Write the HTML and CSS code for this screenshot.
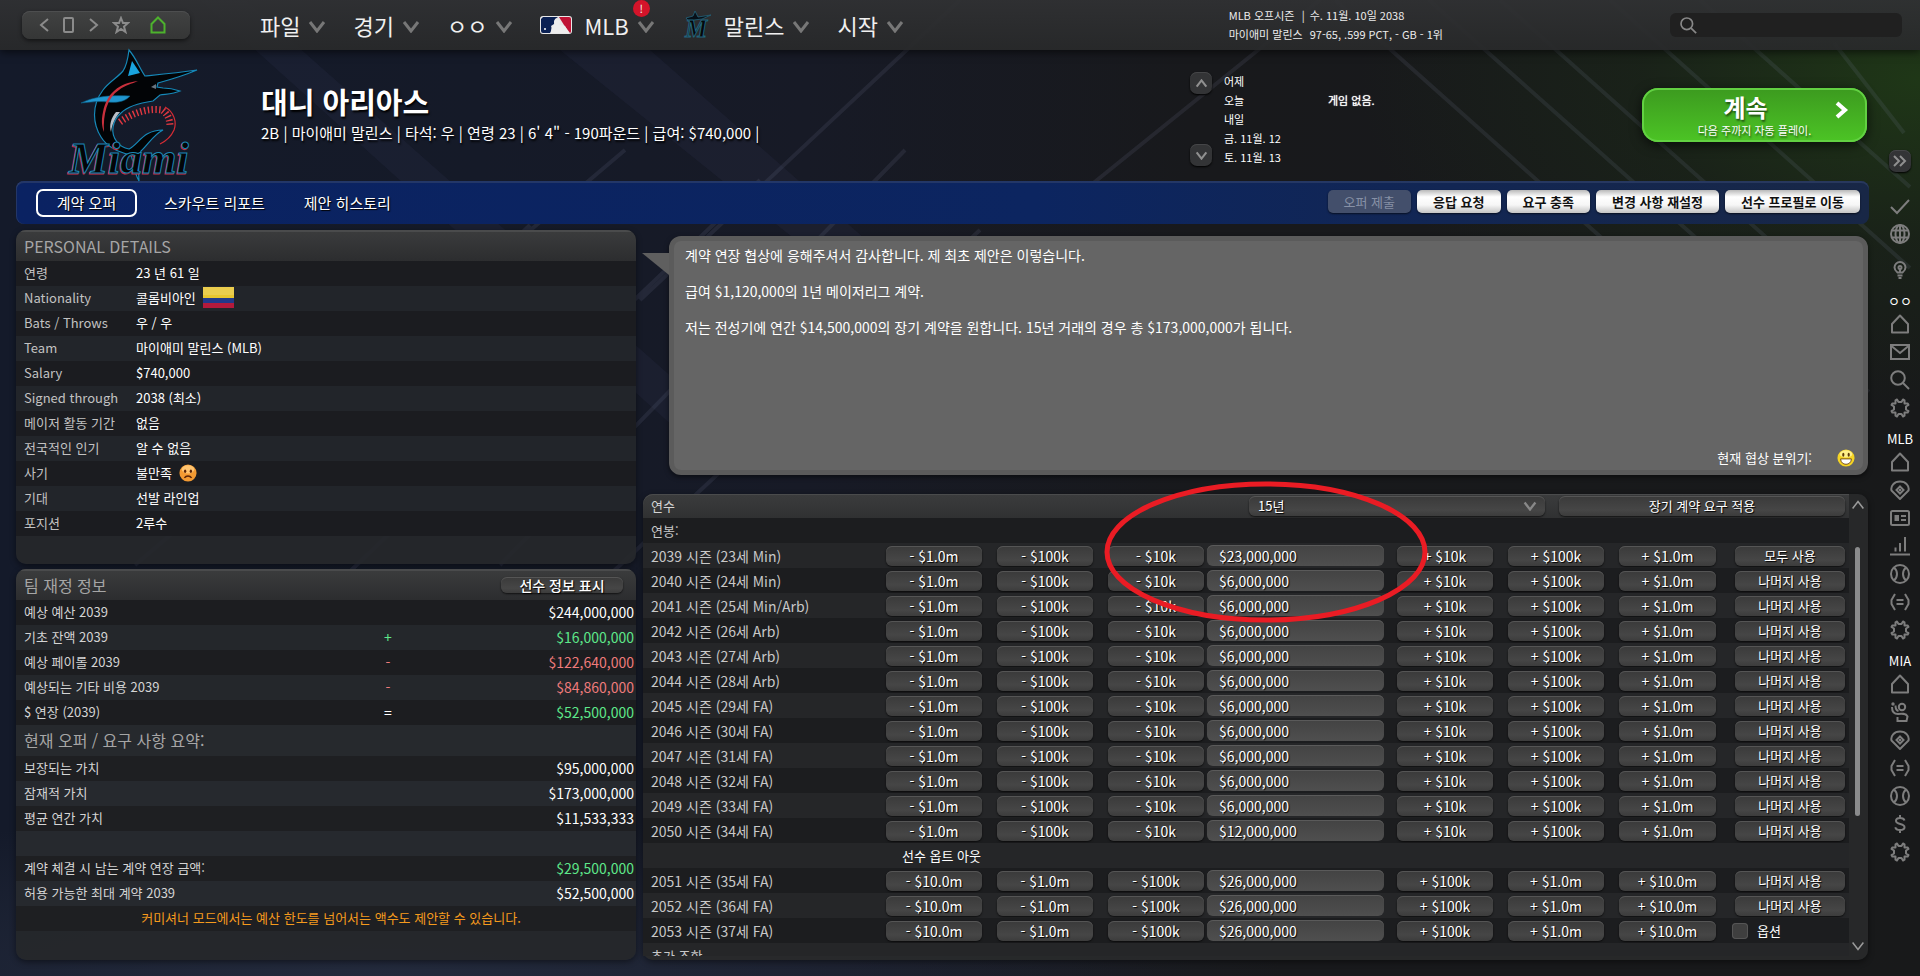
FILE: index.html
```html
<!DOCTYPE html>
<html lang="ko">
<head>
<meta charset="utf-8">
<meta name="viewport" content="width=device-width, initial-scale=1">
<title>대니 아리아스 - 계약 오퍼</title>
<link rel="stylesheet" href="styles.css">
</head>
<body>
<svg class="symbols" aria-hidden="true">
  <symbol id="chevron" viewBox="0 0 18 13"><path d="M2 2l7 9 7-9"/></symbol>
  <symbol id="check" viewBox="0 0 20 20"><path d="M1 11l6 6L19 4"/></symbol>
  <symbol id="globe" viewBox="0 0 20 20"><circle cx="10" cy="10" r="9"/><ellipse cx="10" cy="10" rx="4.500" ry="9"/><path d="M10 1v18M2 6.500h16M2 13.500h16"/></symbol>
  <symbol id="bulb" viewBox="0 0 20 20"><path d="M7.500 12.500C5 10.500 4.500 9 4.500 7.500a5.500 5.500 0 0 1 11 0c0 1.500-.5 3-3 5z"/><circle cx="10" cy="7.500" r="1.500"/><path d="M7.500 15.500h5M8.500 18h3M10 9v3"/></symbol>
  <symbol id="home" viewBox="0 0 20 20"><path stroke-linejoin="round" d="M10 1.500L18 10v8.500H2V10z"/></symbol>
  <symbol id="mail" viewBox="0 0 20 20"><path d="M1 3h18v14H1zM1.500 4L10 11l8.500-7"/></symbol>
  <symbol id="search" viewBox="0 0 20 20"><circle cx="8" cy="8" r="6.800"/><path d="M13 13l6 6"/></symbol>
  <symbol id="gear" viewBox="0 0 20 20"><path stroke-linejoin="round" d="M7 1.500l1.500 2.500h3L13 1.500l1.500.8V5.500h3.200l.8 1.500L16 8.500v3l2.500 1.500-.8 1.500h-3.200v3.200l-1.500.8-1.500-2.500h-3L7 18.500l-1.500-.8v-3.200H2.300L1.500 13 4 11.500v-3L1.500 7l.8-1.500h3.200V2.300z"/></symbol>
  <symbol id="field" viewBox="0 0 20 20"><path d="M10 19L1.500 10.500C.5 6 4 1.500 10 1.500s9.500 4.500 8.500 9z"/><path d="M10 6.500l3.500 3.500-3.500 3.500L6.500 10z"/><path d="M10 9v2"/></symbol>
  <symbol id="card" viewBox="0 0 20 20"><rect x="1" y="3" width="18" height="14" rx="1.500"/><path class="solid" d="M4.500 7h4.500v6H4.500zM11 7h5v2h-5zM11 11h5v2h-5z"/></symbol>
  <symbol id="chart" viewBox="0 0 20 20"><path d="M0 18.500h20M5.500 15.500v-4M10 15.500V7M15 15.500V1"/></symbol>
  <symbol id="ball" viewBox="0 0 20 20"><circle cx="10" cy="10" r="9"/><path d="M4 3.500c4 3.500 4 9.500 0 13M16 3.500c-4 3.500-4 9.500 0 13"/></symbol>
  <symbol id="trade" viewBox="0 0 20 20"><path d="M5 2L1.500 8v4L5 18M15 2l3.500 6v4L15 18M6.500 8h7M6.500 12h7"/></symbol>
  <symbol id="player" viewBox="0 0 20 20"><circle cx="12" cy="5" r="3.200"/><circle class="solid" cx="3" cy="2" r="1.700"/><path d="M2 5c0 5 2 7 6 7 4-.5 8-1 9.500 2.500L16.500 19H7.500v-4M5.500 3.500c0 3 1 5 3 5.500"/></symbol>
  <symbol id="dollar" viewBox="0 0 20 20"><path d="M14.500 6.500C14 4.800 12.500 4 10 4 7.500 4 6 5 6 6.800c0 4.400 8.500 2 8.500 6.400 0 1.800-1.800 2.800-4.500 2.800-2.800 0-4.300-1-4.700-2.800M10 1v3M10 16v3"/></symbol>
</svg>

<svg class="backdrop" viewBox="0 0 1920 976" preserveAspectRatio="none" aria-hidden="true">
  <path class="wide" d="M200 0h45L760 455h-55zM560 50h90l330 290h-60z"/>
  <path class="ray" d="M625 150L135 565M760 180L320 600M905 150L500 565M980 230L400 770M1320 0L1060 210M960 0L640 300M530 225L430 320M1429 0l440 392M1335 0l500 446M1500 0l350 312M1610 0l300 268M1700 0l210 187M1834 43l70 90"/>
</svg>

<header class="topbar">
  <nav class="quick" aria-label="탐색">
    <button aria-label="뒤로"><svg viewBox="0 0 10 14"><path d="M9 1L2 7l7 6"/></svg></button>
    <button aria-label="최근"><svg viewBox="0 0 12 18"><rect x="1" y="2" width="9" height="14" rx="1"/></svg></button>
    <button aria-label="앞으로"><svg viewBox="0 0 10 14"><path d="M1 1l7 6-7 6"/></svg></button>
    <button aria-label="즐겨찾기"><svg viewBox="0 0 18 18"><path d="M9 2l2 5h5l-4 3.500 1.500 5.500L9 13l-4.500 3L6 10.500 2 7h5z"/></svg></button>
    <button class="green" aria-label="홈"><svg viewBox="0 0 18 18"><path d="M9 1.500l6.500 6.500v8.500h-13V8z"/></svg></button>
  </nav>
  <nav class="menu" aria-label="주 메뉴">
    <button>파일<svg class="caret"><use href="#chevron"/></svg></button>
    <button>경기<svg class="caret"><use href="#chevron"/></svg></button>
    <button>ㅇㅇ<svg class="caret"><use href="#chevron"/></svg></button>
    <button>
      <svg class="mlb" viewBox="0 0 32 18"><rect width="32" height="18" rx="3" fill="#e8e8e8"/><path d="M3 1h15l-3 2-1 5-3 2 1 3-2 4H3a2 2 0 0 1-2-2V3z" fill="#0b2154"/><path d="M19 1h10a2 2 0 0 1 2 2v12a2 2 0 0 1-1 2L24 9z" fill="#c01335"/><circle cx="17" cy="6" r="3" fill="#eee"/><path d="M11 17c0-5 1-9 6-9l8 2 4 7z" fill="#eee"/><circle cx="5" cy="13" r="1" fill="#fff"/></svg>
      MLB<svg class="caret"><use href="#chevron"/></svg><span class="badge">!</span>
    </button>
    <button>
      <svg class="fish" viewBox="0 0 30 30"><path d="M4 8l7-2 2-5 3 6 13-2-9 4-8 1-3 4z" fill="#071018" stroke="#23647c" stroke-width=".8"/><text x="3" y="27" class="fish-m">M</text></svg>
      말린스<svg class="caret"><use href="#chevron"/></svg>
    </button>
    <button>시작<svg class="caret"><use href="#chevron"/></svg></button>
  </nav>
  <dl class="status">
    <dt>MLB 오프시즌</dt><dd class="bar">|</dd><dd>수. 11월. 10일 2038</dd>
    <dt>마이애미 말린스</dt><dd class="bar"></dd><dd>97-65, .599 PCT, - GB - 1위</dd>
  </dl>
  <label class="find"><svg><use href="#search"/></svg><input type="search" aria-label="검색"></label>
</header>

<div class="shell">
  <main class="page">
    <section class="hero">
      <svg class="logo" viewBox="0 0 134 131" role="img" aria-label="Miami Marlins">
        <path d="M65 0C72 8 76 19 81 26c10-1 32-3 52-6-14 6-28 10-39 13l-1 4 6 1c7 0 11 1 17 3-7 3-14 3-20 4l-7 6C75 53 63 57 57 63c-9 8-11 20-4 29 3 4 7 6 12 7 10-5 14-19 34-19-10 5-15 15-22 21-3 8-3 17-2 30-5-8-5-18-8-26-14-3-24-8-30-18-8-13-10-31 2-47 6-8 14-12 20-19 4-6 5-13 6-21z" fill="#020406" stroke="#1688b8" stroke-width="1.200"/>
        <path d="M68 11l-4 15 12-3z" fill="#19a4df"/>
        <path d="M17 53c14-7 31-8 49-7-5 6-14 7-22 6-9-1-17 0-27 1z" fill="#2196cf" stroke="#0a6288" stroke-width=".6"/>
        <path d="M74 31C55 33 43 43 39 62c-2 9-1 15 1 20-1-18 3-34 15-42 6-5 13-6 19-9z" fill="#c8303c"/>
        <path d="M52 62c-5 6-7 13-5 20 1-8 4-14 9-20z" fill="#b8bec6"/>
        <path d="M87 37l5-3v5z" fill="#697580"/>
        <path d="M101 57c9 5 12 15 9 23-3 7-8 11-14 14" fill="none" stroke="#d62c35" stroke-width="1.200"/>
        <path d="M56 72c14-10 29-14 42-12 6 4 8 10 8 17" fill="none" stroke="#e03840" stroke-width="7" stroke-dasharray="1.400 2.400"/>
        <text class="script red" x="4" y="124">Miami</text>
        <text class="script" x="5" y="123">Miami</text>
      </svg>
      <div class="who">
        <h1>대니 아리아스</h1>
        <p>2B | 마이애미 말린스 | 타석: 우 | 연령 23 | 6' 4" - 190파운드 | 급여: $740,000 |</p>
      </div>
      <div class="schedule">
        <div class="steps">
          <button aria-label="이전"><svg class="up"><use href="#chevron"/></svg></button>
          <button aria-label="다음"><svg><use href="#chevron"/></svg></button>
        </div>
        <dl>
          <dt>어제</dt><dd></dd>
          <dt>오늘</dt><dd>게임 없음.</dd>
          <dt>내일</dt><dd></dd>
          <dt>금. 11월. 12</dt><dd></dd>
          <dt>토. 11월. 13</dt><dd></dd>
        </dl>
      </div>
      <button class="continue"><b>계속</b><small>다음 주까지 자동 플레이.</small><svg viewBox="0 0 14 18"><path d="M2 2l8 7-8 7"/></svg></button>
    </section>

    <div class="tabs">
      <nav aria-label="선수">
        <a class="active" href="#offer">계약 오퍼</a>
        <a href="#scout">스카우트 리포트</a>
        <a href="#history">제안 히스토리</a>
      </nav>
      <div class="actions">
        <button disabled>오퍼 제출</button>
        <button>응답 요청</button>
        <button>요구 충족</button>
        <button>변경 사항 재설정</button>
        <button>선수 프로필로 이동</button>
      </div>
    </div>

    <div class="columns">
      <div class="left">
        <section class="panel personal">
          <header class="head"><h2>PERSONAL DETAILS</h2></header>
          <dl class="rows">
            <div><dt>연령</dt><dd>23 년 61 일</dd></div>
            <div><dt>Nationality</dt><dd>콜롬비아인 <svg class="flag" viewBox="0 0 31 21" role="img" aria-label="콜롬비아"><path fill="#e8c52f" d="M0 0h31v11H0z"/><path fill="#22398a" d="M0 11h31v5H0z"/><path fill="#b31a3c" d="M0 16h31v5H0z"/><path fill="#fff" opacity=".15" d="M0 0h31v8H0z"/></svg></dd></div>
            <div><dt>Bats / Throws</dt><dd>우 / 우</dd></div>
            <div><dt>Team</dt><dd>마이애미 말린스 (MLB)</dd></div>
            <div><dt>Salary</dt><dd>$740,000</dd></div>
            <div><dt>Signed through</dt><dd>2038 (최소)</dd></div>
            <div><dt>메이저 활동 기간</dt><dd>없음</dd></div>
            <div><dt>전국적인 인기</dt><dd>알 수 없음</dd></div>
            <div><dt>사기</dt><dd>불만족 <svg class="face" viewBox="0 0 20 20"><circle cx="10" cy="10" r="9.500" fill="#f39a32"/><ellipse cx="10" cy="6" rx="7" ry="4.500" fill="#ffc470"/><ellipse cx="6.800" cy="8" rx="1.300" ry="2" fill="#5a2408"/><ellipse cx="13.200" cy="8" rx="1.300" ry="2" fill="#5a2408"/><path d="M6 15.500c2-3 6-3 8 0" fill="none" stroke="#5a2408" stroke-width="1.600"/></svg></dd></div>
            <div><dt>기대</dt><dd>선발 라인업</dd></div>
            <div><dt>포지션</dt><dd>2루수</dd></div>
          </dl>
        </section>

        <section class="panel finance">
          <header class="head"><h2>팀 재정 정보</h2><button class="btn">선수 정보 표시</button></header>
          <table class="sums">
            <tr><th>예상 예산 2039</th><td></td><td class="sum">$244,000,000</td></tr>
            <tr><th>기초 잔액 2039</th><td class="good">+</td><td class="sum good">$16,000,000</td></tr>
            <tr><th>예상 페이롤 2039</th><td class="bad">-</td><td class="sum bad">$122,640,000</td></tr>
            <tr><th>예상되는 기타 비용 2039</th><td class="bad">-</td><td class="sum bad">$84,860,000</td></tr>
            <tr><th>$ 연장 (2039)</th><td>=</td><td class="sum good">$52,500,000</td></tr>
            <tr class="section"><th colspan="3">현재 오퍼 / 요구 사항 요약:</th></tr>
            <tr><th>보장되는 가치</th><td></td><td class="sum">$95,000,000</td></tr>
            <tr><th>잠재적 가치</th><td></td><td class="sum">$173,000,000</td></tr>
            <tr><th>평균 연간 가치</th><td></td><td class="sum">$11,533,333</td></tr>
            <tr><th></th><td></td><td></td></tr>
            <tr><th>계약 체결 시 남는 계약 연장 금액:</th><td></td><td class="sum good">$29,500,000</td></tr>
            <tr><th>허용 가능한 최대 계약 2039</th><td></td><td class="sum">$52,500,000</td></tr>
            <tr><td class="note" colspan="3">커미셔너 모드에서는 예산 한도를 넘어서는 액수도 제안할 수 있습니다.</td></tr>
          </table>
        </section>
      </div>

      <div class="right">
        <section class="bubble">
          <p>계약 연장 협상에 응해주셔서 감사합니다. 제 최초 제안은 이렇습니다.</p>
          <p>급여 $1,120,000의 1년 메이저리그 계약.</p>
          <p>저는 전성기에 연간 $14,500,000의 장기 계약을 원합니다. 15년 거래의 경우 총 $173,000,000가 됩니다.</p>
          <footer>현재 협상 분위기: <svg class="face" viewBox="0 0 20 20"><circle cx="10" cy="10" r="9.500" fill="#f5d424"/><ellipse cx="10" cy="5.500" rx="7" ry="4" fill="#fff08a"/><ellipse cx="7" cy="6.500" rx="1.200" ry="2.200" fill="#5c3a08"/><ellipse cx="13" cy="6.500" rx="1.200" ry="2.200" fill="#5c3a08"/><path d="M4 11h12c0 8-12 8-12 0z" fill="#fff" stroke="#6b430a"/></svg></footer>
        </section>

        <section class="panel contract">
          <header class="years">
            <label for="years">연수</label>
            <span class="pick"><select id="years" class="btn"><option>15년</option></select><svg><use href="#chevron"/></svg></span>
            <button class="btn">장기 계약 요구 적용</button>
          </header>
          <div class="scroll">
            <table class="seasons">
              <colgroup><col class="c-name"><col class="c-step"><col class="c-step"><col class="c-near"><col class="c-money"><col class="c-step"><col class="c-step"><col class="c-last"><col class="c-use"></colgroup>
              <tbody id="seasons"></tbody>
            </table>
          </div>
          <div class="track"><svg class="up"><use href="#chevron"/></svg><i></i><svg><use href="#chevron"/></svg></div>
          <svg class="ring" viewBox="0 0 324 142" preserveAspectRatio="none" aria-hidden="true"><ellipse cx="162" cy="71" rx="159" ry="68"/></svg>
        </section>
      </div>
    </div>
  </main>

  <aside class="rail">
    <button class="fold" aria-label="펼치기"><svg viewBox="0 0 16 16"><path d="M2 3l5 5-5 5M8 3l5 5-5 5"/></svg></button>
    <svg class="ico"><use href="#check"/></svg>
    <svg class="ico"><use href="#globe"/></svg>
    <svg class="ico bulb"><use href="#bulb"/></svg>
    <h3>ㅇㅇ</h3>
    <svg class="ico"><use href="#home"/></svg>
    <svg class="ico"><use href="#mail"/></svg>
    <svg class="ico"><use href="#search"/></svg>
    <svg class="ico"><use href="#gear"/></svg>
    <h3>MLB</h3>
    <svg class="ico"><use href="#home"/></svg>
    <svg class="ico"><use href="#field"/></svg>
    <svg class="ico"><use href="#card"/></svg>
    <svg class="ico"><use href="#chart"/></svg>
    <svg class="ico"><use href="#ball"/></svg>
    <svg class="ico"><use href="#trade"/></svg>
    <svg class="ico"><use href="#gear"/></svg>
    <h3>MIA</h3>
    <svg class="ico"><use href="#home"/></svg>
    <svg class="ico"><use href="#player"/></svg>
    <svg class="ico"><use href="#field"/></svg>
    <svg class="ico"><use href="#trade"/></svg>
    <svg class="ico"><use href="#ball"/></svg>
    <svg class="ico"><use href="#dollar"/></svg>
    <svg class="ico"><use href="#gear"/></svg>
  </aside>
</div>
<script src="seasons.js"></script>
</body>
</html>
```

FILE: styles.css
```css
* { box-sizing: border-box; }

body {
  margin: 0;
  min-height: 100vh;
  position: relative;
  overflow-x: hidden;
  color: #fff;
  font: 14px/20px "Noto Sans CJK KR", "Noto Sans", sans-serif;
  background:
    radial-gradient(ellipse 560px 330px at 100% 8%, #1f3717 0, #1b2a1780 50%, transparent 100%),
    radial-gradient(ellipse 900px 160px at 20% 100%, #232a3c 0, transparent 100%),
    linear-gradient(90deg, #141a2a 0, #151a28 25%, #171a26 42%, #18191c 62%, #18191a 100%);
}

h1, h2, h3, p, dl, dd { margin: 0; }
h2, h3, th { font-weight: 400; }
button, input, select { font: inherit; color: inherit; margin: 0; padding: 0; border: 0; background: none; }
svg { fill: none; stroke: currentColor; flex: none; }

.symbols { position: absolute; width: 0; height: 0; }
.backdrop { position: absolute; inset: 0; width: 100%; height: 100%; z-index: -1; }
.backdrop .wide { fill: #8088c00e; stroke: none; }
.backdrop .ray { stroke: #8890b020; stroke-width: 4; }
.solid { fill: currentColor; stroke: none; }

/* top bar */
.topbar {
  display: flex;
  align-items: center;
  height: 50px;
  padding: 0 18px 0 22px;
  background: linear-gradient(#303133f0, #28292af0);
  box-shadow: 0 2px 8px #0009;
}
.quick {
  display: flex;
  align-items: center;
  width: 168px;
  height: 28px;
  padding-left: 16px;
  gap: 12px;
  border-radius: 8px;
  background: linear-gradient(#414242, #353636);
  box-shadow: 0 2px 4px #0008, inset 0 1px #4d4e4f;
  color: #8b8b8b;
}
.quick button { display: flex; }
.quick svg { height: 14px; width: 12px; stroke-width: 2; }
.quick button:nth-child(2) svg { height: 18px; width: 14px; }
.quick button:nth-child(4) svg { width: 18px; height: 18px; }
.quick .green svg { width: 18px; height: 18px; }
.quick .green { color: #4db22d; padding-left: 7px; }

.menu { display: flex; align-items: center; gap: 27px; padding-left: 70px; font-size: 22px; line-height: 40px; color: #f0f0f0; text-shadow: 1px 2px 2px #000a; }
.menu button { display: flex; align-items: center; gap: 8px; position: relative; height: 40px; white-space: nowrap; }
.caret { width: 18px; height: 13px; stroke-width: 3; color: #777; margin-top: 2px; }
.mlb { width: 32px; height: 18px; margin-right: 4px; stroke: none; }
.fish { width: 30px; height: 30px; margin-right: 4px; overflow: visible; }
.fish-m { font: italic bold 25px "Liberation Serif", serif; fill: #05080b; stroke: #23647c; }
.badge {
  position: absolute; right: 5px; top: -5px;
  width: 17px; height: 17px; border-radius: 50%;
  background: #d4142a; font-size: 11px; line-height: 17px; text-align: center;
}

.status { display: grid; grid-template-columns: 73px 8px auto; margin-left: auto; margin-right: 227px; font-size: 11px; line-height: 19px; color: #ececec; white-space: nowrap; }
.find { display: flex; align-items: center; width: 232px; height: 24px; padding-left: 10px; border-radius: 6px; background: #202020; color: #888; }
.find svg { width: 17px; height: 17px; stroke-width: 2; }
.find input { width: 100%; min-width: 0; outline: 0; }

/* page frame */
.shell { display: grid; grid-template-columns: minmax(0, 1fr) 51px; }
.page { padding-left: 16px; }

.hero { display: flex; height: 131px; }
.logo { width: 134px; height: 131px; margin-left: 48px; stroke: none; overflow: visible; }
.script { font: italic bold 44px "Liberation Serif", serif; fill: #030507; stroke: #1c86b2; }
.script.red { stroke: #c62f45; }
.who { padding: 31px 0 0 63px; text-shadow: 1px 2px 2px #000; white-space: nowrap; }
.who h1 { font-size: 29px; line-height: 40px; }
.who p { font-size: 15px; line-height: 24px; }
.schedule { display: flex; gap: 12px; margin-left: auto; padding-top: 22px; font-size: 11px; line-height: 19px; white-space: nowrap; }
.schedule dl { display: grid; grid-template-columns: 104px 314px; align-content: start; }
.schedule dd { text-shadow: 0 0 1px #fff; }
.steps { display: flex; flex-direction: column; justify-content: space-between; height: 94px; }
.steps button, .fold {
  display: grid; place-items: center; width: 22px; height: 22px; border-radius: 7px;
  background: #333436; box-shadow: 0 1px 2px #000, inset 0 1px #454648; color: #909090;
}
.steps svg { width: 13px; height: 9px; stroke-width: 3; }
.up { transform: scaleY(-1); }

.continue {
  position: relative; width: 225px; height: 54px; margin: 38px 2px 0 0;
  border-radius: 16px; text-align: center;
  background: linear-gradient(#3c9a1f, #4cc425);
  box-shadow: inset 0 0 0 2px #62d142, 0 3px 12px #000a;
  text-shadow: 1px 2px 2px #0008;
}
.continue b, .continue small { display: block; }
.continue b { font-size: 24px; line-height: 30px; padding-right: 18px; }
.continue small { font-size: 11px; line-height: 16px; }
.continue svg { position: absolute; right: 18px; top: 13px; width: 14px; height: 18px; stroke-width: 4; }

.tabs {
  display: flex; justify-content: space-between; align-items: center; height: 43px; padding: 0 9px 0 20px;
  border-radius: 8px; background: linear-gradient(90deg, #0a2262, #0c2560 55%, #182746);
  box-shadow: inset 0 2px #33456d99, inset 1px 0 #33456d99;
}
.tabs nav { display: flex; gap: 27px; font-size: 15px; }
.tabs a { color: #fff; text-decoration: none; line-height: 28px; text-shadow: 1px 1px 1px #000; }
.tabs a + a + a { padding-left: 12px; }
.tabs .active { width: 101px; line-height: 24px; text-align: center; border: 2px solid #fff; border-radius: 7px; }
.actions { display: flex; gap: 6px; padding-bottom: 2px; }
.actions button {
  height: 23px; padding: 0 16px; border-radius: 5px; font-size: 13px; line-height: 22px; font-weight: 700; color: #111;
  background: linear-gradient(#b9b9b9, #fff 30%, #f6f6f6 65%, #c4c4c4); box-shadow: 0 1px 2px #0009;
}
.actions button:disabled { font-weight: 400; color: #8791a6; background: #434f6b; }

/* panels */
.columns { display: grid; grid-template-columns: minmax(0, 620fr) minmax(0, 1226fr); gap: 7px; padding-top: 6px; }
.left { display: flex; flex-direction: column; gap: 5px; }
.panel { border-radius: 10px; overflow: hidden; background: #26282bee; box-shadow: 0 2px 6px #0007; }
.personal { padding-bottom: 28px; }
.finance { padding-bottom: 29px; }
.head {
  display: flex; align-items: center; justify-content: space-between; height: 31px; padding: 0 13px 0 8px;
  background: linear-gradient(#3b3c3d, #2c2d2f); box-shadow: inset 0 2px #4a4b4c; color: #a6a6a6;
}
.head h2 { font-size: 16px; line-height: 24px; }
.btn {
  height: 20px; border-radius: 6px; color: #fff; text-align: center; line-height: 20px;
  background: linear-gradient(#3a3a3a, #464646 70%, #3c3c3c);
  box-shadow: inset 0 1px #555, 0 1px 2px #000a; text-shadow: 1px 1px 1px #000;
}
.head .btn { width: 122px; height: 16px; line-height: 16px; font-weight: 500; }

.rows div { display: grid; grid-template-columns: 112px 1fr; height: 25px; padding-left: 8px; font-size: 13px; line-height: 23px; background: #22252a; }
.rows div:nth-child(odd) { background: #1b1c20; }
.rows dt { color: #c2c2c2; }
.rows dd { display: flex; align-items: center; gap: 7px; height: 23px; }
.flag { width: 31px; height: 21px; stroke: none; }
.face { width: 18px; height: 18px; stroke: none; }

.sums { width: 100%; border-collapse: collapse; table-layout: fixed; color: #fff; }
.sums tr { height: 25px; background: #24272b; }
.sums tr:nth-child(odd) { background: #1c1d20; }
.sums tr.section { height: 31px; background: #26292d; }
.sums tr.section ~ tr { background: #1e1f22; }
.sums tr.section ~ tr:nth-child(even) { background: #26292e; }
.sums th, .sums td { padding: 0 0 2px; line-height: 22px; text-align: left; }
.sums th { padding-left: 8px; font-size: 13px; color: #d4d4d4; white-space: nowrap; }
.sums .section th { font-size: 16px; color: #a6a6a6; }
.sums td { width: 86px; text-align: center; }
.sums td:last-child { width: 205px; }
.sums .sum { padding-right: 2px; text-align: right; }
.sums .note { color: #f59a1d; font-size: 13px; padding-left: 10px; }
.sums .good { color: #5ee88a; }
.sums .bad { color: #ef7b7b; }

/* negotiation message */
.bubble {
  position: relative; display: flex; flex-direction: column; height: 239px; margin: 6px 1px 0 26px; padding: 5px 8px 0 11px;
  border: 5px solid #5b5b5b; border-radius: 12px; background: #656565; line-height: 18px; box-shadow: 0 2px 5px #0008;
}
.bubble::before {
  content: ""; position: absolute; left: -32px; top: 12px; width: 27px; height: 22px;
  background: #5f5f5f; clip-path: polygon(0 0, 100% 0, 100% 100%);
}
.bubble p + p { margin-top: 18px; }
.bubble footer { display: flex; align-items: center; justify-content: flex-end; gap: 25px; margin-top: auto; font-size: 13px; line-height: 24px; }

/* contract years */
.right { display: flex; flex-direction: column; gap: 19px; }
.contract { position: relative; display: grid; grid-template-columns: minmax(0, 1fr) 19px; grid-template-rows: 24px 442px; margin-right: 1px; overflow: visible; background: #292a2bee; }
.years { display: flex; align-items: center; padding: 0 4px 0 8px; border-radius: 10px 0 0; background: linear-gradient(#3b3c3d, #303132); box-shadow: inset 0 1px #4a4b4c; color: #d4d4d4; }
.years label { font-size: 13px; }
.pick { position: relative; display: flex; width: 296px; margin: 0 14px 0 auto; }
.pick select { width: 100%; appearance: none; padding-left: 9px; text-align: left; font-size: 13px; }
.pick svg { position: absolute; right: 8px; top: 5px; width: 14px; height: 10px; stroke-width: 3; color: #888; pointer-events: none; }
.years > .btn { width: 286px; font-size: 13px; }
.scroll { overflow: hidden; height: 438px; }
.seasons { width: 100%; border-collapse: collapse; table-layout: fixed; }
.c-name { width: 236px; }
.c-step { width: 111px; }
.c-near { width: 106px; }
.c-money { width: 183px; }
.c-last { width: 115px; }
.c-use { width: 122px; }
.seasons tr { height: 25px; background: #252628; }
.seasons tr:nth-child(odd) { background: #1c1d1f; }
.seasons th { padding: 0 0 0 8px; color: #c8c8c8; text-align: left; line-height: 24px; white-space: nowrap; }
.seasons th[colspan] { font-size: 13px; }
.seasons td { padding: 0 8px 0 7px; line-height: 20px; }
.seasons td:nth-child(4) { padding-right: 3px; }
.seasons td:nth-child(5) { padding: 0 6px 0 0; }
.seasons td:nth-child(8) { padding-right: 11px; }
.seasons td:nth-child(9) { padding: 0 4px 0 8px; }
.seasons td:nth-child(9) .btn { font-size: 13px; }
.seasons .btn { display: block; width: 100%; }
.seasons .money {
  display: block; width: 100%; height: 21px; padding-left: 12px; border-radius: 6px;
  background: linear-gradient(#434343, #4f4f4f); box-shadow: inset 0 1px #5a5a5a; text-shadow: 1px 1px 1px #000;
}
.seasons .free { padding-left: 23px; font-size: 13px; }
.seasons .option { display: flex; align-items: center; gap: 9px; margin-left: -3px; font-size: 13px; }
.option input { appearance: none; width: 16px; height: 16px; border-radius: 4px; background: #3f3f3f; box-shadow: inset 0 0 0 1px #555; }
.track { grid-column: 2; grid-row: 1 / 3; display: flex; flex-direction: column; align-items: center; padding: 6px 2px 9px 0; border-radius: 0 10px 10px 0; color: #9a9a9a; }
.track svg { width: 14px; height: 10px; stroke-width: 2; }
.track i { width: 5px; height: 269px; margin: 37px 0 auto; border-radius: 3px; background: #8a8b8c; }
.ring { position: absolute; left: 37.6%; top: -13px; width: 324px; height: 142px; stroke: #ea1c24; stroke-width: 5; pointer-events: none; }

/* side rail */
.rail { display: flex; flex-direction: column; align-items: center; padding: 100px 0 0 11px; color: #7d7d7d; }
.fold { margin-bottom: 20px; }
.fold svg { width: 16px; height: 16px; stroke-width: 2; }
.ico { width: 20px; height: 20px; margin: 4px 0; stroke-width: 2; }
.ico.bulb { margin-top: 12px; }
.rail h3 { font-size: 13px; line-height: 18px; padding-top: 8px; color: #fff; }
```

FILE: seasons.js
```js
const small = ['- $1.0m', '- $100k', '- $10k', '+ $10k', '+ $100k', '+ $1.0m'];
const large = ['- $10.0m', '- $1.0m', '- $100k', '+ $100k', '+ $1.0m', '+ $10.0m'];

const seasons = [
  ['2039 시즌 (23세 Min)', '$23,000,000', small, '모두 사용'],
  ['2040 시즌 (24세 Min)', '$6,000,000', small],
  ['2041 시즌 (25세 Min/Arb)', '$6,000,000', small],
  ['2042 시즌 (26세 Arb)', '$6,000,000', small],
  ['2043 시즌 (27세 Arb)', '$6,000,000', small],
  ['2044 시즌 (28세 Arb)', '$6,000,000', small],
  ['2045 시즌 (29세 FA)', '$6,000,000', small],
  ['2046 시즌 (30세 FA)', '$6,000,000', small],
  ['2047 시즌 (31세 FA)', '$6,000,000', small],
  ['2048 시즌 (32세 FA)', '$6,000,000', small],
  ['2049 시즌 (33세 FA)', '$6,000,000', small],
  ['2050 시즌 (34세 FA)', '$12,000,000', small],
  null,
  ['2051 시즌 (35세 FA)', '$26,000,000', large],
  ['2052 시즌 (36세 FA)', '$26,000,000', large],
  ['2053 시즌 (37세 FA)', '$26,000,000', large, 'option'],
];

const step = (text) => `<td><button class="btn">${text}</button></td>`;

function row(season) {
  if (!season) return '<tr><th></th><td class="free" colspan="8">선수 옵트 아웃</td></tr>';
  const [name, money, steps, use = '나머지 사용'] = season;
  const last = use === 'option'
    ? '<td><label class="option"><input type="checkbox">옵션</label></td>'
    : step(use);
  return `<tr><th scope="row">${name}</th>${steps.slice(0, 3).map(step).join('')}
    <td><input class="money" aria-label="${name}" value="${money}"></td>
    ${steps.slice(3).map(step).join('')}${last}</tr>`;
}

document.getElementById('seasons').innerHTML =
  '<tr><th colspan="9">연봉:</th></tr>' +
  seasons.map(row).join('') +
  '<tr><th colspan="9">추가 조항</th></tr>';
```
